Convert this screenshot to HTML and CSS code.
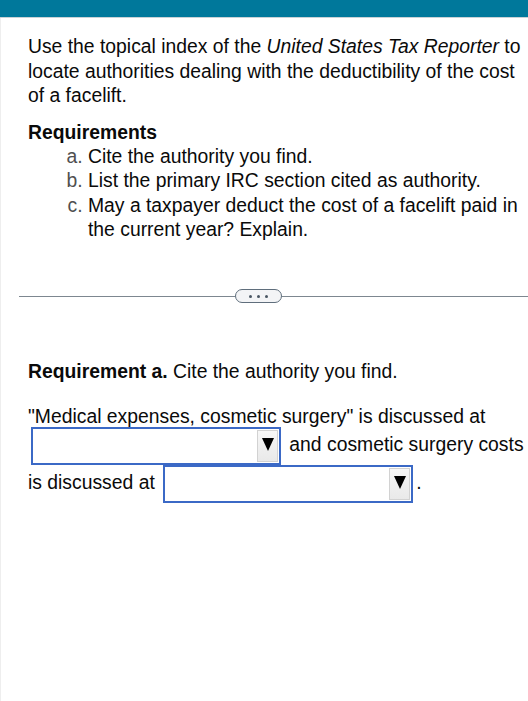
FILE: index.html
```html
<!DOCTYPE html>
<html>
<head>
<meta charset="utf-8">
<link rel="stylesheet" href="styles.css">
</head>
<body>
<div class="topbar"></div>
<div class="page">
  <p class="intro">Use the topical index of the <i>United States Tax Reporter</i> to locate authorities dealing with the deductibility of the cost of a facelift.</p>
  <div class="req-title">Requirements</div>
  <ol class="reqs">
    <li>Cite the authority you find.</li>
    <li>List the primary IRC section cited as authority.</li>
    <li>May a taxpayer deduct the cost of a facelift paid in the current year? Explain.</li>
  </ol>
  <div class="divider">
    <span class="rule rule-left"></span>
    <span class="pill"><span class="dot"></span><span class="dot"></span><span class="dot"></span></span>
    <span class="rule"></span>
  </div>
  <p class="req-a"><b>Requirement a.</b> Cite the authority you find.</p>
  <div class="answer">"Medical expenses, cosmetic surgery" is discussed at <span class="select"><span class="btn"><svg width="12" height="13" viewBox="0 0 12 13"><polygon points="0,0 12,0 6,13" fill="#000"/></svg></span></span> and cosmetic surgery costs is discussed at <span class="select"><span class="btn"><svg width="12" height="13" viewBox="0 0 12 13"><polygon points="0,0 12,0 6,13" fill="#000"/></svg></span></span>.</div>
</div>
</body>
</html>
```

FILE: styles.css
```css
html, body {
  margin: 0;
  padding: 0;
  background: #fff;
  overflow: hidden;
}
body {
  font-family: "Liberation Sans", Arial, sans-serif;
  font-size: 19.33px;
  color: #0a0a0a;
}
.topbar {
  height: 17px;
  background: #00789b;
  border-bottom: 1px solid #c9d2d6;
}
.page {
  border-left: 1px solid #eeeeee;
  padding: 17px 0 0 27px;
  min-height: 683px;
  box-sizing: border-box;
}
.intro {
  margin: 0;
  line-height: 24.5px;
}
.req-title {
  margin-top: 12px;
  font-weight: bold;
  line-height: 24.5px;
}
.reqs {
  margin: 0;
  padding-left: 60px;
  line-height: 24.3px;
  list-style: lower-alpha;
}
.reqs li::marker {
  color: #505050;
}
.divider {
  display: flex;
  align-items: center;
  margin: 47px 0 0 -9px;
  height: 14px;
}
.rule {
  flex: 1;
  height: 1px;
  background: #7d8790;
}
.rule-left {
  flex: 0 0 216px;
}
.pill {
  width: 45px;
  height: 12px;
  border: 1px solid #5f6e7c;
  border-radius: 7px;
  background: #f3f4f6;
  display: flex;
  align-items: center;
  justify-content: center;
  gap: 5px;
}
.dot {
  width: 3px;
  height: 3px;
  border-radius: 50%;
  background: #4a5663;
}
.req-a {
  margin: 57px 0 0;
  line-height: 24.5px;
}
.answer {
  margin: 21px -8px 0 0;
  line-height: 21px;
}
.select {
  display: inline-block;
  vertical-align: middle;
  width: 250px;
  height: 38px;
  box-sizing: border-box;
  border: 2px solid #3b69c6;
  background: #fff;
  margin: 0 3px;
  position: relative;
}
.btn {
  position: absolute;
  right: 1px;
  top: 1px;
  width: 21px;
  height: 32px;
  box-sizing: border-box;
  border: 1px solid #d2d2d2;
  background: linear-gradient(#f7f7f7, #e9e9e9);
  display: flex;
  justify-content: center;
  padding-top: 7px;
}
.btn svg {
  display: block;
}
```
